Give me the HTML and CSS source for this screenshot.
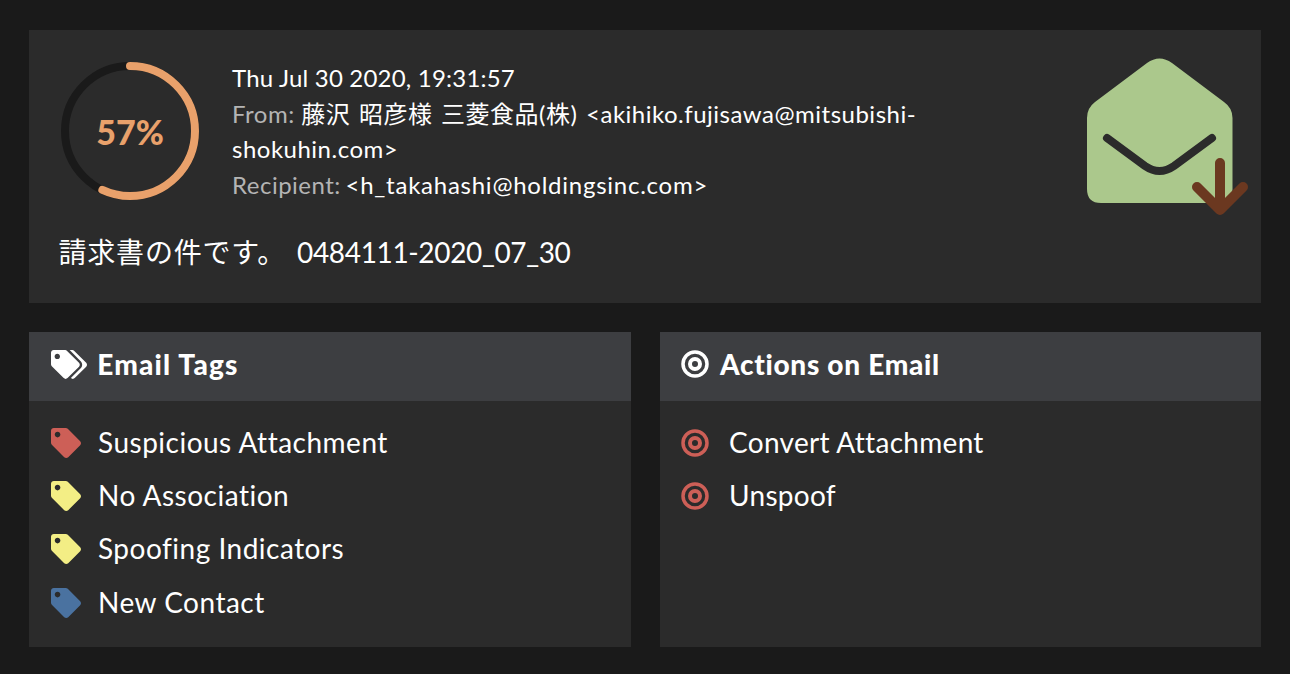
FILE: index.html
```html
<!DOCTYPE html>
<html>
<head>
	<title>Email detail</title>
	<meta name="viewport" content="width=device-width,initial-scale=1">
	<link rel="stylesheet" href="styles.css">
</head>
<body>

	<div class="container">
		<div class="summary">
			<div class="summary-top">
				<div class="score">
					<svg class="score-ring" width="140" height="140" viewBox="0 0 140 140">
						<circle cx="70" cy="70" r="65" fill="none" stroke="#1a1a1a" stroke-width="8"/>
						<circle cx="70" cy="70" r="65" fill="none" stroke="#e9a16b" stroke-width="8" stroke-linecap="round" pathLength="100" stroke-dasharray="57 100" transform="rotate(-90 70 70)"/>
					</svg>
					<span class="score-value">57%</span>
				</div>
				<div class="meta">
					<div class="meta-date">Thu Jul 30 2020, 19:31:57</div>
					<div><span class="meta-label">From:</span> <span class="sender">藤沢 昭彦様 三菱食品(株) </span>&lt;akihiko.fujisawa@mitsubishi-shokuhin.com&gt;</div>
					<div><span class="meta-label">Recipient:</span> <span class="recipient">&lt;h_takahashi@holdingsinc.com&gt;</span></div>
				</div>
				<svg class="mail-icon" width="146" height="146" viewBox="0 0 146 146">
					<path fill="#abc88c" d="M60 5Q72.5 -4 85 5L137 44Q145.500 50 145.500 60V131Q145.500 145 131 145H14Q0 145 0 131V60Q0 50 8 44Z"/>
					<path fill="none" stroke="#2b2b2b" stroke-width="8" stroke-linecap="round" d="M20 80L58 108Q72.500 118 87 108L125 80"/>
					<path fill="none" stroke="#6b3820" stroke-width="10" stroke-linecap="round" stroke-linejoin="round" d="M133 105V152M110 129L133 152L156 129"/>
				</svg>
			</div>
			<div class="subject">請求書の件です。 <span class="subject-ref">0484111-2020_07_30</span></div>
		</div>

		<div class="columns">
			<div class="card">
				<div class="card-head">
					<svg class="head-icon" width="36" height="29" viewBox="0 0 640 512"><path fill="#fff" d="M497.941 225.941L286.059 14.059A48 48 0 0 0 252.118 0H48C21.49 0 0 21.49 0 48v204.118a48 48 0 0 0 14.059 33.941l211.882 211.882c18.745 18.745 49.137 18.745 67.882 0l204.118-204.118c18.745-18.745 18.745-49.137 0-67.882zM112 160c-26.51 0-48-21.49-48-48s21.49-48 48-48 48 21.49 48 48-21.490 48-48 48zm513.941 133.823L421.823 497.941c-18.745 18.745-49.137 18.745-67.882 0l-.36-.36L527.640 323.522c16.999-16.999 26.360-39.600 26.360-63.640s-9.362-46.641-26.360-63.640L331.397 0h48.721a48 48 0 0 1 33.941 14.059l211.882 211.882c18.745 18.745 18.745 49.137 0 67.882z"/></svg>
					<h2 class="tags-title">Email Tags</h2>
				</div>
				<ul class="rows">
					<li><svg class="tag tag-red" width="30" height="30" viewBox="0 0 512 512"><use href="#tag"/></svg>Suspicious Attachment</li>
					<li><svg class="tag tag-yellow" width="30" height="30" viewBox="0 0 512 512"><use href="#tag"/></svg>No Association</li>
					<li><svg class="tag tag-yellow" width="30" height="30" viewBox="0 0 512 512"><use href="#tag"/></svg>Spoofing Indicators</li>
					<li><svg class="tag tag-blue" width="30" height="30" viewBox="0 0 512 512"><use href="#tag"/></svg>New Contact</li>
				</ul>
			</div>
			<div class="card">
				<div class="card-head card-head-actions">
					<svg class="target target-white" width="28" height="28" viewBox="0 0 28 28"><use href="#target"/></svg>
					<h2>Actions on Email</h2>
				</div>
				<ul class="rows rows-actions">
					<li><svg class="target target-red" width="28" height="28" viewBox="0 0 28 28"><use href="#target"/></svg>Convert Attachment</li>
					<li><svg class="target target-red" width="28" height="28" viewBox="0 0 28 28"><use href="#target"/></svg>Unspoof</li>
				</ul>
			</div>
		</div>
	</div>

	<svg class="defs" width="0" height="0">
		<defs>
			<path id="tag" d="M0 252.118V48C0 21.490 21.490 0 48 0h204.118a48 48 0 0 1 33.941 14.059l211.882 211.882c18.745 18.745 18.745 49.137 0 67.882L293.823 497.941c-18.745 18.745-49.137 18.745-67.882 0L14.059 286.059A48 48 0 0 1 0 252.118zM112 64c-26.510 0-48 21.490-48 48s21.490 48 48 48 48-21.490 48-48-21.490-48-48-48z"/>
			<g id="target" fill="none" stroke="currentColor">
				<circle cx="14" cy="14" r="12" stroke-width="3.500"/>
				<circle cx="14" cy="14" r="5" stroke-width="4"/>
			</g>
		</defs>
	</svg>

</body>
</html>
```

FILE: styles.css
```css
*{
	box-sizing: border-box;
	padding: 0;
	margin: 0;
}

body{
	background-color: #1a1a1a;
	color: #fff;
	font-family: "Lato", "Noto Sans CJK JP", sans-serif;
}

.container{
	padding: 30px 29px 27px;
	display: flex;
	flex-direction: column;
	gap: 29px;
}

.summary{
	background-color: #2b2b2b;
	height: 273px;
	padding: 31px 28px 0 31px;
}
.summary-top{
	display: flex;
	align-items: flex-start;
}

.score{
	display: grid;
	place-items: center;
	width: 140px;
	height: 140px;
	flex-shrink: 0;
}
.score-ring, .score-value{
	grid-area: 1 / 1;
}
.score-value{
	color: #e9a16b;
	font-size: 34px;
	font-weight: 900;
}

.meta{
	width: 690px;
	margin-left: 32px;
	margin-top: -1px;
	font-size: 24px;
	line-height: 35.5px;
	letter-spacing: .5px;
}
.meta-date{
	letter-spacing: .2px;
}
.meta-label{
	color: #b4b4b4;
}
.sender{
	word-spacing: 2px;
}
.recipient{
	letter-spacing: .75px;
	margin-left: -2px;
}

.mail-icon{
	margin-left: auto;
	margin-top: -3px;
	overflow: visible;
	flex-shrink: 0;
}

.subject{
	font-size: 28px;
	margin-top: 27px;
	margin-left: -1.5px;
	letter-spacing: .8px;
}
.subject-ref{
	letter-spacing: -.35px;
	margin-left: 3px;
}

.columns{
	display: grid;
	grid-template-columns: 602px 601px;
	gap: 29px;
}

.card{
	background-color: #2b2b2b;
	height: 315px;
}
.card-head{
	background-color: #3d3e41;
	height: 69px;
	padding: 0 0 5px 21.7px;
	display: flex;
	align-items: center;
	gap: 10.5px;
}
.card-head-actions{
	padding-left: 21px;
	gap: 11px;
}
.card-head h2{
	font-size: 28px;
	font-weight: 900;
	letter-spacing: .7px;
}
.card-head .tags-title{
	letter-spacing: 1.2px;
}

.rows{
	list-style: none;
	padding: 14px 0 0 21.7px;
}
.rows li{
	height: 53.3px;
	display: flex;
	align-items: center;
	gap: 17.3px;
	font-size: 28px;
	letter-spacing: .5px;
}
.rows li svg{
	margin-top: 2px;
}
.rows-actions{
	padding-left: 21px;
}
.rows-actions li{
	gap: 20px;
	letter-spacing: .3px;
}

.tag-red{fill: #cd5f57;}
.tag-yellow{fill: #f3ee85;}
.tag-blue{fill: #4a72a0;}

.target-white{color: #fff;}
.target-red{color: #cd5f57;}

.defs{
	position: absolute;
}
```
